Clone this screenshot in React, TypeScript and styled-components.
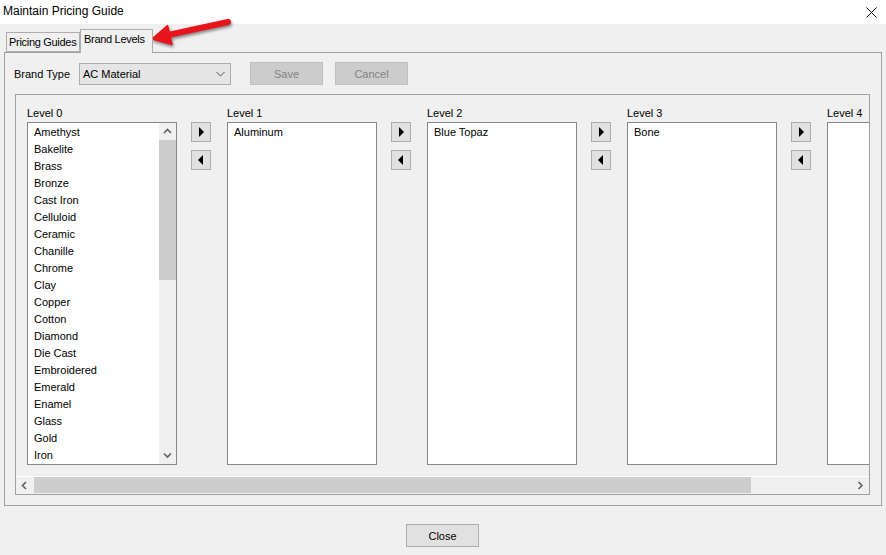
import React from 'react'
import styled, { createGlobalStyle } from 'styled-components'

const GlobalStyle = createGlobalStyle`
  html, body {
    margin: 0;
    padding: 0;
    background: #f0f0f0;
  }
  body {
    font-family: "Liberation Sans", Arial, sans-serif;
    font-size: 11px;
    color: #000;
  }
`

const Window = styled.div`
  position: relative;
  width: 886px;
  height: 555px;
  background: #f0f0f0;
  overflow: hidden;
  display: flex;
  flex-direction: column;
`

const TitleBar = styled.div`
  height: 24px;
  background: #fff;
  display: flex;
  align-items: center;
  justify-content: space-between;
  padding: 0 9px 0 3px;
  flex-shrink: 0;
`

const Title = styled.span`
  font-size: 12px;
  line-height: 14px;
  margin-top: -2px;
`

const TabStrip = styled.div`
  display: flex;
  align-items: flex-end;
  height: 23px;
  margin-top: 5px;
  padding-left: 6px;
  position: relative;
  z-index: 1;
`

const Tab = styled.div<{ $active?: boolean; $width: number }>`
  box-sizing: border-box;
  width: ${p => p.$width}px;
  height: ${p => (p.$active ? 24 : 20)}px;
  margin-bottom: ${p => (p.$active ? -1 : 0)}px;
  padding: ${p => (p.$active ? '3px 0 0 3px' : '3px 0 0 2px')};
  border: 1px solid #adadad;
  border-bottom: ${p => (p.$active ? 'none' : '1px solid #adadad')};
  background: #f0f0f0;
  line-height: 13px;
  letter-spacing: -0.3px;
  white-space: nowrap;
  overflow: hidden;
`

const TabPanel = styled.div`
  box-sizing: border-box;
  height: 454px;
  margin: 0 4px;
  border: 1px solid #a0a0a0;
  display: flex;
  flex-direction: column;
  padding: 9px 11px 10px 10px;
`

const Toolbar = styled.div`
  display: flex;
  align-items: center;
  height: 23px;
`

const FieldLabel = styled.span`
  width: 65px;
  margin-left: -1px;
`

const Combo = styled.div`
  box-sizing: border-box;
  width: 152px;
  height: 22px;
  margin-top: 1px;
  background: #e5e5e5;
  border: 1px solid #acacac;
  display: flex;
  align-items: center;
  justify-content: space-between;
  padding: 0 5px 0 3px;
`

const Button = styled.div<{ $disabled?: boolean }>`
  box-sizing: border-box;
  width: 73px;
  height: 23px;
  display: flex;
  align-items: center;
  justify-content: center;
  background: ${p => (p.$disabled ? '#cccccc' : '#e1e1e1')};
  border: 1px solid ${p => (p.$disabled ? '#bfbfbf' : '#adadad')};
  color: ${p => (p.$disabled ? '#838383' : '#000')};
`

const ToolButtons = styled.div`
  display: flex;
  gap: 12px;
  margin-left: 19px;
`

const GroupBox = styled.div`
  margin-top: 9px;
  flex: 1;
  border: 1px solid #a0a0a0;
  display: flex;
  flex-direction: column;
`

const Viewport = styled.div`
  height: 381px;
  border-bottom: 1px solid #fff;
  overflow: hidden;
  display: flex;
  padding-left: 11px;
`

const Column = styled.div`
  display: flex;
  flex-shrink: 0;
`

const LevelBlock = styled.div`
  display: flex;
  flex-direction: column;
  padding-top: 11px;
  flex-shrink: 0;
`

const LevelLabel = styled.div`
  height: 14px;
  line-height: 14px;
  margin-bottom: 2px;
`

const ListBox = styled.div`
  box-sizing: border-box;
  width: 150px;
  height: 343px;
  border: 1px solid #828790;
  background: #fff;
  display: flex;
  overflow: hidden;
`

const Items = styled.div`
  flex: 1;
  padding-top: 1px;
`

const Item = styled.div`
  height: 17px;
  line-height: 17px;
  padding-left: 6px;
  white-space: nowrap;
`

const VScroll = styled.div`
  width: 17px;
  background: #f0f0f0;
  display: flex;
  flex-direction: column;
`

const ScrollArrow = styled.div`
  width: 17px;
  height: 17px;
  display: flex;
  align-items: center;
  justify-content: center;
  flex-shrink: 0;
`

const VThumb = styled.div`
  height: 140px;
  background: #cdcdcd;
`

const VTrack = styled.div`
  flex: 1;
`

const Movers = styled.div`
  display: flex;
  flex-direction: column;
  gap: 8px;
  margin: 27px 16px 0 14px;
`

const MoveButton = styled.div`
  box-sizing: border-box;
  width: 20px;
  height: 20px;
  background: #e1e1e1;
  border: 1px solid #adadad;
  display: flex;
  align-items: center;
  justify-content: center;
`

const Triangle = styled.div<{ $dir: 'left' | 'right' }>`
  width: 0;
  height: 0;
  border-top: 5px solid transparent;
  border-bottom: 5px solid transparent;
  ${p => (p.$dir === 'right' ? 'border-left: 5px solid #000; margin-left: 1px;' : 'border-right: 5px solid #000; margin-right: 1px;')}
`

const HScroll = styled.div`
  height: 17px;
  display: flex;
  background: #f0f0f0;
`

const HThumb = styled.div`
  width: 717px;
  height: 16px;
  margin-left: 1px;
  background: #cdcdcd;
`

const HTrack = styled.div`
  flex: 1;
`

const Footer = styled.div`
  display: flex;
  justify-content: center;
  padding: 18px 1px 0 0;
`

const Callout = styled.svg`
  position: absolute;
  left: 140px;
  top: 10px;
  filter: drop-shadow(1px 2px 1.5px rgba(0, 0, 0, 0.45));
`

const Chevron = ({ dir }: { dir: 'up' | 'down' | 'left' | 'right' }) => {
  const paths = {
    up: 'M1 5 L4.5 1.5 L8 5',
    down: 'M1 1.5 L4.5 5 L8 1.5',
    left: 'M5 1 L1.5 4.5 L5 8',
    right: 'M1.5 1 L5 4.5 L1.5 8',
  }
  const vertical = dir === 'up' || dir === 'down'
  return (
    <svg width={vertical ? 9 : 7} height={vertical ? 7 : 9} viewBox={vertical ? '0 0 9 7' : '0 0 7 9'}>
      <path d={paths[dir]} fill="none" stroke="#606060" strokeWidth="1.6" />
    </svg>
  )
}

const levels = [
  {
    name: 'Level 0',
    scroll: true,
    items: [
      'Amethyst', 'Bakelite', 'Brass', 'Bronze', 'Cast Iron', 'Celluloid', 'Ceramic',
      'Chanille', 'Chrome', 'Clay', 'Copper', 'Cotton', 'Diamond', 'Die Cast',
      'Embroidered', 'Emerald', 'Enamel', 'Glass', 'Gold', 'Iron',
    ],
  },
  { name: 'Level 1', items: ['Aluminum'] },
  { name: 'Level 2', items: ['Blue Topaz'] },
  { name: 'Level 3', items: ['Bone'] },
  { name: 'Level 4', items: [] as string[] },
]

function App() {
  return (
    <Window>
      <GlobalStyle />
      <TitleBar>
        <Title>Maintain Pricing Guide</Title>
        <svg width="11" height="11" viewBox="0 0 11 11">
          <path d="M0.5 0.5 L10.5 10.5 M10.5 0.5 L0.5 10.5" stroke="#000" strokeWidth="1" />
        </svg>
      </TitleBar>

      <TabStrip>
        <Tab $width={74}>Pricing Guides</Tab>
        <Tab $width={73} $active>Brand Levels</Tab>
      </TabStrip>

      <TabPanel>
        <Toolbar>
          <FieldLabel>Brand Type</FieldLabel>
          <Combo>
            <span>AC Material</span>
            <svg width="9" height="6" viewBox="0 0 9 6">
              <path d="M0.5 1 L4.5 5 L8.5 1" fill="none" stroke="#555" strokeWidth="1" />
            </svg>
          </Combo>
          <ToolButtons>
            <Button $disabled>Save</Button>
            <Button $disabled>Cancel</Button>
          </ToolButtons>
        </Toolbar>

        <GroupBox>
          <Viewport>
            {levels.map((level, i) => (
              <Column key={level.name}>
                <LevelBlock>
                  <LevelLabel>{level.name}</LevelLabel>
                  <ListBox>
                    <Items>
                      {level.items.map(item => (
                        <Item key={item}>{item}</Item>
                      ))}
                    </Items>
                    {level.scroll && (
                      <VScroll>
                        <ScrollArrow><Chevron dir="up" /></ScrollArrow>
                        <VThumb />
                        <VTrack />
                        <ScrollArrow><Chevron dir="down" /></ScrollArrow>
                      </VScroll>
                    )}
                  </ListBox>
                </LevelBlock>
                {i < levels.length - 1 && (
                  <Movers>
                    <MoveButton><Triangle $dir="right" /></MoveButton>
                    <MoveButton><Triangle $dir="left" /></MoveButton>
                  </Movers>
                )}
              </Column>
            ))}
          </Viewport>
          <HScroll>
            <ScrollArrow><Chevron dir="left" /></ScrollArrow>
            <HThumb />
            <HTrack />
            <ScrollArrow><Chevron dir="right" /></ScrollArrow>
          </HScroll>
        </GroupBox>
      </TabPanel>

      <Footer>
        <Button>Close</Button>
      </Footer>

      <Callout width="100" height="40" viewBox="0 0 100 40">
        <line x1="88" y1="12" x2="28" y2="25" stroke="#e8141c" strokeWidth="6" strokeLinecap="round" />
        <polygon points="12,29 27.5,15.5 32,34.5" fill="#e8141c" stroke="#e8141c" strokeWidth="1.5" strokeLinejoin="round" />
      </Callout>
    </Window>
  )
}

export default App
